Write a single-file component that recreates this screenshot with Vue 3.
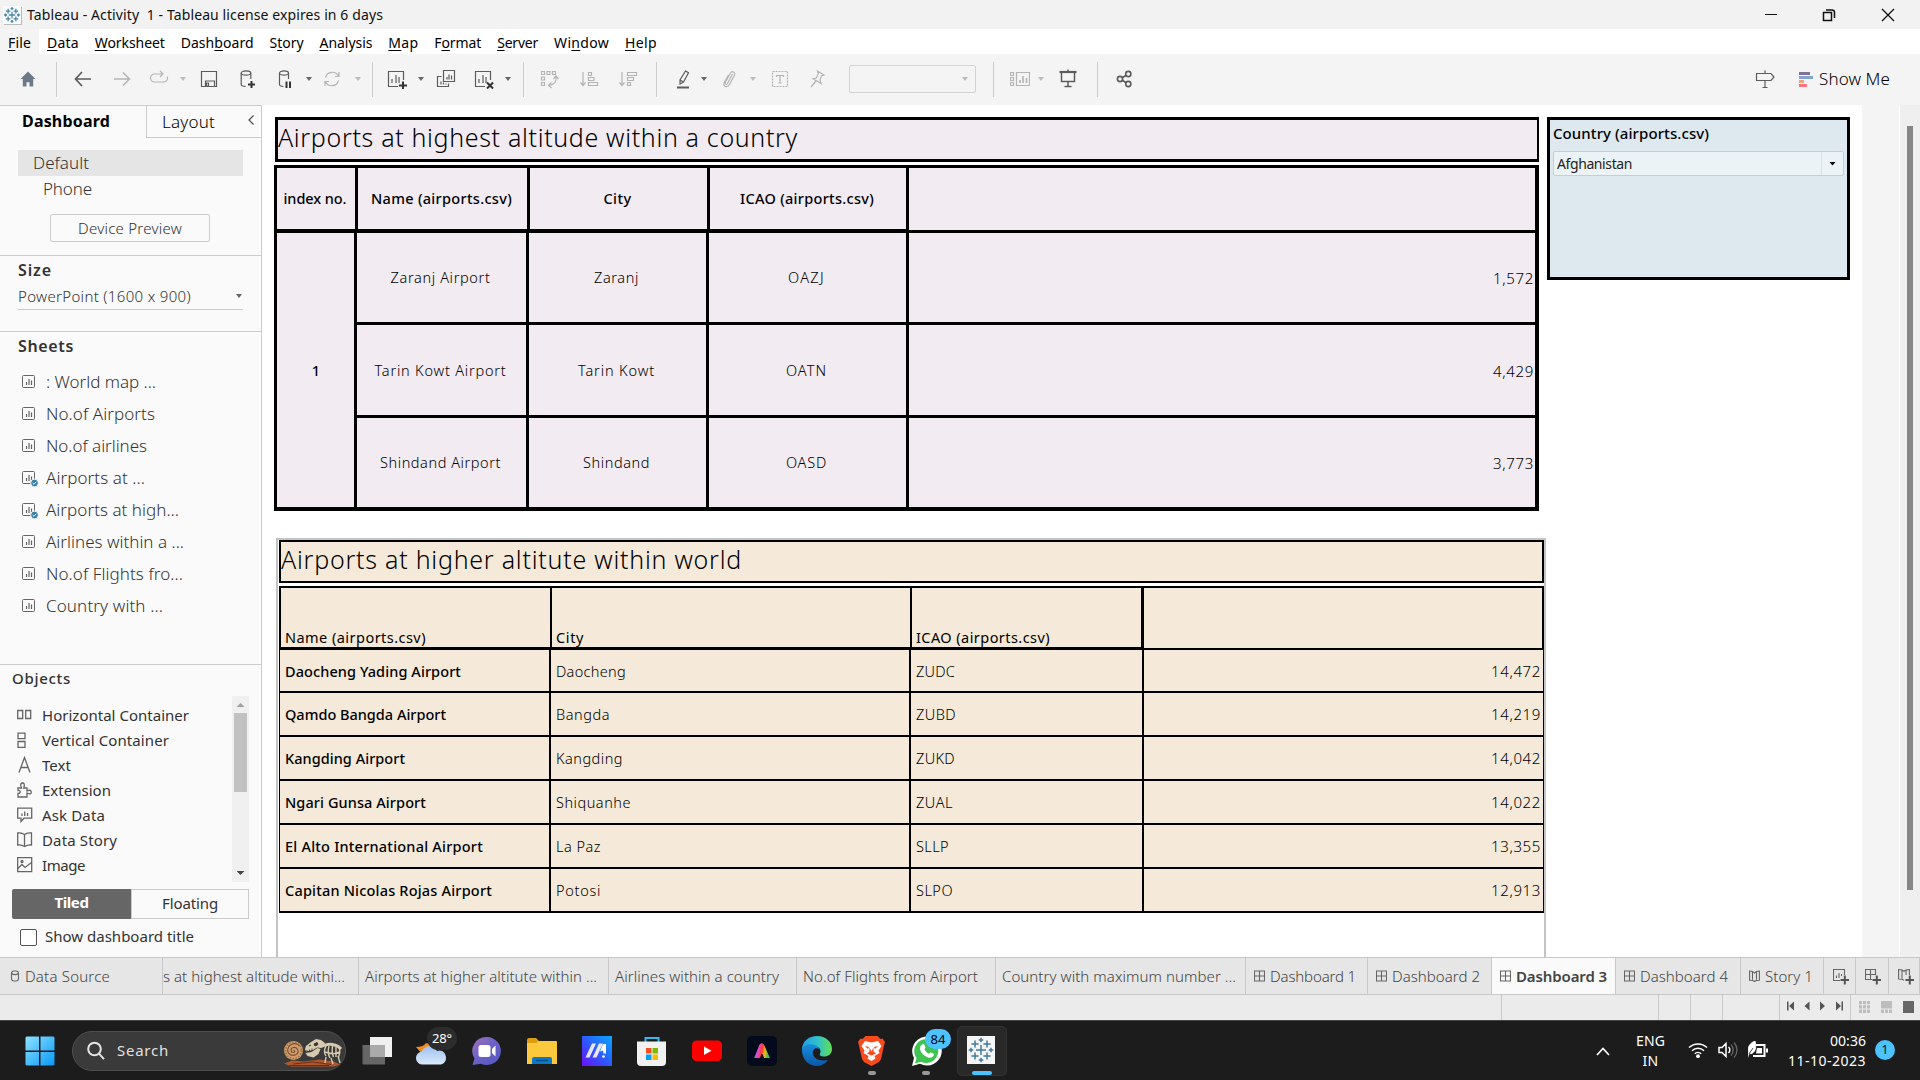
<script setup>
// Spreads letter spacing so that a label occupies a fixed width
const vFit = {
  mounted(el, { value }) {
    if (!value) return
    const r = document.createRange()
    r.selectNodeContents(el)
    const w = r.getBoundingClientRect().width
    const n = el.textContent.trim().length
    if (w && n) el.style.letterSpacing = ((value - w) / n).toFixed(3) + 'px'
  }
}

const menus = [
  ['', 'F', 'ile', 23], ['', 'D', 'ata', 32], ['', 'W', 'orksheet', 70], ['Dash', 'b', 'oard', 73],
  ['S', 't', 'ory', 34], ['', 'A', 'nalysis', 53], ['', 'M', 'ap', 30], ['F', 'o', 'rmat', 47],
  ['', 'S', 'erver', 41], ['Wi', 'n', 'dow', 55], ['', 'H', 'elp', 32]
]

const bars = '<path d="M6 14V10M9 14V6M12 14V8"/>'
const icons = {
  home: '<path d="M10 2.5L2.5 10h2.3v7.5h3.7v-4.3h3v4.3h3.7V10h2.3z" fill="#6c7986" stroke="none"/>',
  back: '<path d="M18 10H2.5M9 3L2.5 10 9 17" stroke-width="1.7"/>',
  fwd: '<path d="M2 10h15.5M11 3.5l6.5 6.5-6.5 6.5" stroke-width="1.5"/>',
  redo: '<path d="M13 5.500H5.500a4 4 0 0 0 0 8h9a4 4 0 0 0 4-4V8M11 2.500l3 3-3 3" transform="translate(0 -.5)"/>',
  save: '<path d="M2.5 2.5h15v15h-15zM6.500 17.500v-5.500h9v5.500"/><path d="M7.500 14h2v3h-2z"/>',
  ds: '<ellipse cx="8" cy="4" rx="4.800" ry="2.200"/><path d="M3.200 4v11.500c0 1 2 1.800 4.500 2M12.800 4v6"/><path class="b" d="M10 15.500h7M13.500 12v7"/>',
  pause: '<ellipse cx="9" cy="4" rx="4.500" ry="2.200"/><path d="M4.500 4v11.500c0 1 2 1.800 4 2M13.500 4v6"/><path class="b" d="M11.500 12.500v6.500M15 12.500v6.500"/>',
  refresh: '<path d="M3.500 8.500a7 7 0 0 1 13.200-1M16.500 11.500a7 7 0 0 1-13.200 1M17 3v4.500h-4M3 17v-4.500h4"/>',
  addws: '<path d="M11 17.500H1.500v-15h15V11"/>' + bars.replace('M6', 'M5') + '<path class="b" d="M12 16.500h8M16 12.500v8"/>',
  dup: '<path d="M7.500 1.500h11v11h-11zM5.500 7.500h-4v10h11v-3"/><path d="M11 10.500V8M13 10.500V5.500M15.500 10.500V6.500M5 15.500v-3M7.500 15.500v-2M10 15.500v-1"/>',
  clear: '<path d="M11 17.500H1.500v-15h15V11"/>' + bars.replace('M6', 'M5') + '<path class="b" d="M13 13.500l6 6M19 13.500l-6 6"/>',
  swap: '<path d="M2.500 2.500h3v3h-3zM8 2.500h3v3H8zM13.500 2.500h3v3h-3zM2.500 8h3v3h-3zM2.500 13.500h3v3h-3zM17 8c1 4-2 8-7 8.500M12.500 13.500l-3 3 3 2.500M14.500 10l2.500-3 2.500 3"/>',
  asc: '<path d="M4 3v13M1.500 13.500L4 16.500l2.500-3M9.500 3.500h3v3h-3zM9.500 8.500h5.500v3H9.500zM9.500 13.500h9v3h-9z"/>',
  desc: '<path d="M4 3v13M1.500 13.500L4 16.500l2.500-3M9.500 3.500h9v3h-9zM9.500 8.500h6v3h-6zM9.500 13.500h3v3h-3z"/>',
  marker: '<path d="M12.500 2l3 1.700-5 9.300-3.500 2V11zM7 11l3.500 2"/><path d="M4 18.500h12" stroke-width="2"/>',
  clip: '<path d="M13 5l-5 9.500c-1 1.500-3 .5-2-1.500l5-9c1.500-2.500 5-1 4 2l-5 9.500c-2.500 4-7 2-5-2.500L9 6" transform="translate(.5 0)"/>',
  textbox: '<path d="M2.500 2.500h15v15h-15z" stroke-dasharray="2 1"/><path d="M6.500 8V6.500h7V8M10 6.500v7.500M8.500 14h3"/>',
  pin: '<path d="M10.500 2l6.500 4-2.500.8-1.500 4.200 1 3.500-8-4.700 3.300-.8 2-4.500zM9 12l-5 6"/>',
  fit: '<path d="M.5 3.500h3v3h-3zM.5 8.500h3v3h-3zM.5 13.500h3v3h-3zM6.500 3.500h13v13h-13z"/><path d="M10 14v-3M13 14V7M16.500 14V9" stroke-width="1.600"/>',
  present: '<path d="M1.500 3h17" stroke-width="2.200"/><path d="M3.500 3.500v9h13v-9M10 13v4.500M6.500 17.500h7M10 0.500V3" stroke-width="1.500"/>',
  share: '<g stroke-width="1.600"><circle cx="6" cy="10" r="2.600"/><circle cx="14.300" cy="5" r="2.600"/><circle cx="14.300" cy="15" r="2.600"/><path d="M8.200 8.700l4-2.400M8.200 11.300l4 2.400"/></g>',
  sign: '<path d="M1.500 4.500H16l3 3.500-3 3.500H1.500zM10 1.500v3M10 11.500V19M7.500 18.500h5"/>'
}
// A trailing dash marks a disabled tool
const tools = [
  'home', '|', 'back', 'fwd-', 'redo-', 'v-', 'save', 'ds', 'pause', 'v', 'refresh-', 'v-', '|',
  'addws', 'v', 'dup', 'clear', 'v', '|', 'swap-', 'asc-', 'desc-', '|', 'marker', 'v', 'clip-', 'v-',
  'textbox-', 'pin-', 'combo', '|', 'fit-', 'v-', 'present', '|', 'share', 'sign'
].map(t => ({ name: t.replace('-', ''), off: t.endsWith('-') }))

const sheets = [
  [': World map ...', 110], ['No.of Airports', 109], ['No.of airlines', 101], ['Airports at ...', 99, true],
  ['Airports at high...', 133, true], ['Airlines within a ...', 138], ['No.of Flights fro...', 137], ['Country with ...', 117]
]

const objects = [
  ['Horizontal Container', 147, '<path d="M.7 4.500h5v8h-5zM8.700 4.500h5v8h-5z"/>'],
  ['Vertical Container', 127, '<path d="M1 2.200h7v5.500H1zM1 10.500h7v6H1z"/>'],
  ['Text', 29, '<path d="M2 16.500L7.500 1.500 13 16.500M4 11.500h7"/>'],
  ['Extension', 69, '<path d="M1 7h3.500C3 3 4 2 5.500 2S8 3 6.800 7H10v3c3-1.500 4.300-.5 4.300 1.200S13 13.500 10 12v4H1v-3.500c3 0 3-3.500 0-3z"/>'],
  ['Ask Data', 63, '<path d="M.7 2.200h14v10H7L4 15.500v-3.300H.7zM5 10V7.500M7.700 10V5.500M10.500 10V7"/>'],
  ['Data Story', 75, '<path d="M7.500 3.500C5 1.500 3 1.500.7 2v12c2.500-.5 4.500 0 6.800 1.500C10 14 12 13.500 14.500 14V2C12 1.500 10 1.500 7.500 3.500zV15"/>'],
  ['Image', 43, '<path d="M.7 1.700h14v14h-14zM1 12.500l4-4 3 3 6.500-5"/><circle cx="5" cy="5.500" r="1"/>']
]

const rows1 = [
  [['Zaranj Airport', 100], ['Zaranj', 45], ['OAZJ', 37], ['1,572', 41]],
  [['Tarin Kowt Airport', 132], ['Tarin Kowt', 77], ['OATN', 41], ['4,429', 41]],
  [['Shindand Airport', 121], ['Shindand', 67], ['OASD', 41], ['3,773', 41]]
]
const rows2 = [
  [['Daocheng Yading Airport', 176], ['Daocheng', 70], ['ZUDC', 39], ['14,472', 50]],
  [['Qamdo Bangda Airport', 161], ['Bangda', 54], ['ZUBD', 40], ['14,219', 50]],
  [['Kangding Airport', 120], ['Kangding', 67], ['ZUKD', 39], ['14,042', 50]],
  [['Ngari Gunsa Airport', 141], ['Shiquanhe', 75], ['ZUAL', 37], ['14,022', 50]],
  [['El Alto International Airport', 198], ['La Paz', 45], ['SLLP', 33], ['13,355', 50]],
  [['Capitan Nicolas Rojas Airport', 207], ['Potosi', 45], ['SLPO', 37], ['12,913', 50]]
]

const tabs = [
  { t: 'Data Source', w: 85, i: 'db' },
  { t: 's at highest altitude withi...', w: 182, cut: true },
  { t: 'Airports at higher altitute within ...', w: 232 },
  { t: 'Airlines within a country', w: 164 },
  { t: 'No.of Flights from Airport', w: 175 },
  { t: 'Country with maximum number ...', w: 234 },
  { t: 'Dashboard 1', w: 86, i: 'dash' },
  { t: 'Dashboard 2', w: 88, i: 'dash' },
  { t: 'Dashboard 3', w: 91, i: 'dash', on: true },
  { t: 'Dashboard 4', w: 88, i: 'dash' },
  { t: 'Story 1', w: 48, i: 'story' }
]
const tabIcons = {
  db: '<rect x="2.500" y="1" width="7" height="10" rx="2.500"/><path d="M2.500 3.500c1.500 1.500 5.500 1.500 7 0"/>',
  dash: '<path d="M.5 1h10v10H.5zM.5 6h10M5.500 1v10"/>',
  story: '<path d="M5.500 3C4.500 1.500 3 1 .6 1v9.300c2.400 0 3.900.2 4.900 1.200 1-1 2.500-1.200 4.900-1.200V1C8 1 6.500 1.500 5.500 3z"/><path d="M3.500 1.500v8.300M7.500 1.500v8.300"/>'
}
const addPlus = '<path class="b" d="M7.500 12h8.500M11.800 7.500v9"/>'
const adders = [
  '<path d="M7 12.500H.5v-11h11V7M3.500 10V7.500M6 10V5M8.500 8V6"/>',
  '<path d="M7 11.500H.5v-10h10V7M.5 6.500h10M5.500 1.500v10"/>',
  '<path d="M6 3.500C5 2 3.500 1.500.6 1.500v9.500c2.900 0 4 .2 5.400 1.200M6 3.500C7 2 8.500 1.500 11.400 1.500V7M4 2v8.500M8 2v5"/>'
]
const crosses = [
  [14, 14, 5], [8, 8, 3.600], [20, 8, 3.600], [8, 20, 3.600], [20, 20, 3.600],
  [14, 4, 2.300], [14, 24, 2.300], [4, 14, 2.300], [24, 14, 2.300]
].map(([x, y, r]) => `M${x - r} ${y}h${2 * r}M${x} ${y - r}v${2 * r}`).join('')
</script>

<template>
  <div class="screen">
    <header class="title">
      <svg class="applogo" viewBox="0 0 28 28"><path :d="crosses" stroke="#4a86ab" stroke-width="2" fill="none" /></svg>
      <span v-fit="356" class="cap">Tableau - Activity&nbsp; 1 - Tableau license expires in 6 days</span>
      <div class="winbtns">
        <svg viewBox="0 0 14 14"><path d="M1 6.500h12" /></svg>
        <svg viewBox="0 0 14 14"><path d="M1.500 4.500h8v8h-8zM4 2h6a2.500 2.500 0 0 1 2.500 2.500v5.500" stroke-width="1.500" /></svg>
        <svg viewBox="0 0 14 14"><path d="M1 1l12 12M13 1L1 13" stroke-width="1.300" /></svg>
      </div>
    </header>

    <nav class="menu">
      <span v-for="m in menus" :key="m[2]" class="mi"><span v-fit="m[3]">{{ m[0] }}<u>{{ m[1] }}</u>{{ m[2] }}</span></span>
    </nav>

    <div class="toolbar">
      <template v-for="(t, i) in tools" :key="i">
        <i v-if="t.name === '|'" class="sep"></i>
        <i v-else-if="t.name === 'v'" class="caret" :class="{ off: t.off }"></i>
        <div v-else-if="t.name === 'combo'" class="combo"><i class="caret off"></i></div>
        <svg v-else class="tool" :class="{ off: t.off }" viewBox="0 0 20 20" v-html="icons[t.name]"></svg>
      </template>
      <div class="showme">
        <svg width="14" height="15" viewBox="0 0 14 15">
          <path d="M0 0h11v3H0z" fill="#85709a" /><path d="M0 4h14v3H0z" fill="#82a6cf" />
          <path d="M0 8h5v3H0z" fill="#f2a477" /><path d="M0 12h8v3H0z" fill="#fb7380" />
        </svg>
        <span v-fit="71">Show Me</span>
      </div>
    </div>

    <main>
      <aside>
        <div class="ptabs">
          <div class="pt on"><b v-fit="88">Dashboard</b></div>
          <div class="pt lay"><span v-fit="53">Layout</span>
            <svg width="8" height="12" viewBox="0 0 8 12"><path d="M6.500 1.500L2 6l4.500 4.500" fill="none" stroke="#555" stroke-width="1.300" /></svg>
          </div>
        </div>
        <div class="devices">
          <div class="dev sel"><span v-fit="56">Default</span></div>
          <div class="dev ph"><span v-fit="49">Phone</span></div>
          <div class="preview"><span v-fit="104">Device Preview</span></div>
        </div>
        <section class="size">
          <h3><span v-fit="34">Size</span></h3>
          <div class="select"><span v-fit="173">PowerPoint (1600 x 900)</span><i class="caret"></i></div>
        </section>
        <section class="sheets">
          <h3><span v-fit="56">Sheets</span></h3>
          <div v-for="s in sheets" :key="s[0]" class="sheet">
            <svg width="18" height="18" viewBox="0 0 18 18">
              <rect x=".5" y="2.500" width="12" height="12" rx="1" fill="none" stroke="#666" />
              <path d="M4.500 12V9M7 12V6M9.500 12V7.500" stroke="#666" stroke-width="1.200" />
              <template v-if="s[2]">
                <circle cx="12.500" cy="14" r="3.900" fill="#3b7fa3" stroke="#fafafa" />
                <path d="M10.700 14l1.300 1.300 2.300-2.600" fill="none" stroke="#fff" />
              </template>
            </svg>
            <span v-fit="s[1]">{{ s[0] }}</span>
          </div>
        </section>
        <section class="objects">
          <h3><span v-fit="59">Objects</span></h3>
          <div class="olist">
            <div class="oitems">
              <div v-for="o in objects" :key="o[0]" class="obj">
                <svg width="16" height="17" viewBox="0 0 16 17" v-html="o[2]"></svg><span v-fit="o[1]">{{ o[0] }}</span>
              </div>
            </div>
            <div class="oscroll"><i class="up"></i><i class="thumb"></i><i class="down"></i></div>
          </div>
          <div class="mode"><b><span v-fit="34">Tiled</span></b><div><span v-fit="56">Floating</span></div></div>
          <div class="check"><i></i><span v-fit="149">Show dashboard title</span></div>
        </section>
      </aside>

      <div class="canvas">
        <div class="maincol">
          <h1 class="t1"><span v-fit="520">Airports at highest altitude within a country</span></h1>
          <div class="table one">
            <div class="hrow">
              <div><span v-fit="63">index no.</span></div><div><span v-fit="141">Name (airports.csv)</span></div>
              <div><span v-fit="28">City</span></div><div><span v-fit="134">ICAO (airports.csv)</span></div><div></div>
            </div>
            <div class="body">
              <div class="idx">1</div>
              <template v-for="r in rows1" :key="r[0][0]">
                <div v-for="(c, j) in r" :key="j" :class="{ num: j === 3 }"><span v-fit="c[1]">{{ c[0] }}</span></div>
              </template>
            </div>
          </div>
          <div class="frame">
            <h1 class="t2"><span v-fit="461">Airports at higher altitute within world</span></h1>
            <div class="table two">
              <div class="hrow">
                <div><span v-fit="141">Name (airports.csv)</span></div><div><span v-fit="28">City</span></div>
                <div><span v-fit="134">ICAO (airports.csv)</span></div><div></div>
              </div>
              <div class="body">
                <template v-for="r in rows2" :key="r[0][0]">
                  <div v-for="(c, j) in r" :key="j" :class="{ num: j === 3, name: j === 0 }"><span v-fit="c[1]">{{ c[0] }}</span></div>
                </template>
              </div>
            </div>
          </div>
        </div>
        <div class="filter">
          <b><span v-fit="156">Country (airports.csv)</span></b>
          <div class="dd"><span v-fit="75">Afghanistan</span><div class="ddb"><i></i></div></div>
        </div>
      </div>
      <div class="gutter"></div>
      <div class="vscroll"><i></i></div>
    </main>

    <div class="tabs">
      <div v-for="t in tabs" :key="t.t" class="tab" :class="{ on: t.on, cut: t.cut, ico: t.i, src: t.i === 'db' }">
        <svg v-if="t.i" width="11" height="12" viewBox="0 0 11 12" v-html="tabIcons[t.i]"></svg>
        <span v-fit="t.w">{{ t.t }}</span>
      </div>
      <div v-for="(a, i) in adders" :key="i" class="tab add">
        <svg width="17" height="17" viewBox="0 0 17 17" v-html="a + addPlus"></svg>
      </div>
    </div>

    <div class="status">
      <i></i><i></i><i></i><i></i><i></i>
      <div class="nav">
        <svg width="57" height="12" viewBox="0 0 57 12"><path fill="#555" d="M0 1.500h1.500v9H0zM7 1.500v9L2 6zM22.500 1.500v9L17.500 6zM33 1.500v9l5-4.500zM49 1.500v9l5-4.500zM54.500 1.500H56v9h-1.500z" /></svg>
      </div>
      <div class="views">
        <svg width="55" height="12" viewBox="0 0 55 12">
          <path fill="#bdbdbd" d="M0 0h3v3.300H0zM4 0h3v3.300H4zM8 0h3v3.300H8zM0 4.300h3v3.300H0zM4 4.300h3v3.300H4zM8 4.300h3v3.300H8zM0 8.600h3v3.300H0zM4 8.600h3v3.300H4zM8 8.600h3v3.300H8zM22 0h11v7.600H22zM22 8.600h3v3.300h-3zM26 8.600h3v3.300h-3zM30 8.600h3v3.300h-3z" />
          <path fill="#666" d="M44 0h11v12H44z" />
        </svg>
      </div>
    </div>

    <footer class="task">
      <svg width="30" height="30" viewBox="0 0 30 30">
        <defs><linearGradient id="win" x1="0" y1="0" x2="1" y2="1"><stop offset="0" stop-color="#8be3ff" /><stop offset="1" stop-color="#0c97f7" /></linearGradient></defs>
        <path fill="url(#win)" d="M1.500.5H14v14H.500v-13zM15.500.5h13l1 1v13h-14zM.5 16H14v13.500H1.500l-1-1zM15.500 16h14v12.500l-1 1h-13z" />
      </svg>
      <div class="search">
        <svg width="20" height="20" viewBox="0 0 20 20"><circle cx="8.500" cy="8" r="6.300" /><path d="M13 12.700l5 5.500" /></svg>
        <span v-fit="52">Search</span>
        <svg class="fossil" width="60" height="32" viewBox="0 0 60 32">
          <path d="M1 28.500l8-3 12 1 16-2 14 2 6 3-6 2H8z" fill="#b0562c" /><path d="M10 29l20-2 18 2.500M6 30.500h40" stroke="#6f3016" fill="none" />
          <circle cx="10.500" cy="15.500" r="9.500" fill="#cf9f70" />
          <circle cx="10.500" cy="15.500" r="8" stroke="#a97548" stroke-width="2" stroke-dasharray="1.500 1.500" />
          <path d="M10.500 15.500c1.500-1 1.500 2-.5 2s-3.500-4 .5-5 6.500 4.500 2.500 7-9.500-1-8-6 8-6.500 11.500-2.500" stroke="#7d5030" fill="none" stroke-width="1.200" />
          <path d="M22 14l1-3 5-4 5-3 5 1 4 3-1 4-3 1-4-.5-4 2.500-7 1.500zM22.500 18l6-1 6-4 3 1-2 5-5 3.500-6-1.500z" fill="#d6cab0" />
          <path d="M31 9l3-1.500 1 2-3 1.500zM26 11l2-1" fill="#3a342c" stroke="#3a342c" />
          <path d="M24 17v-2M26.500 16.500v-2M29 15.500v-2" stroke="#3a342c" stroke-width=".8" />
          <path d="M41 11c4-3 13-2 17 3" stroke="#d6cab0" stroke-width="3" fill="none" />
          <path d="M43 11q-3 6 0 10M46 11q-2 7 1 12M49.500 11q-1 7 1 11M53 12q0 6 0 10M56.500 13q1 5-1 9M43 22l-1 6M48 23l2 6M55 21l2 7M42 17q8 3 15 0" stroke="#d6cab0" stroke-width="1.400" fill="none" />
        </svg>
      </div>
      <svg width="30" height="30" viewBox="0 0 30 30"><path d="M8 1h22v20H8z" fill="#f0f0f0" /><path d="M1.500 9H23v19.500H1.500a1 1 0 0 1-1-1V9z" fill="#666" /><path d="M8 9h15v12H8z" fill="#aaa" /></svg>
      <div class="badged">
        <svg width="31" height="30" viewBox="0 0 31 30">
          <defs><linearGradient id="cl" x1="0" y1="0" x2="0" y2="1"><stop offset="0" stop-color="#9fc0f3" /><stop offset="1" stop-color="#dbe9fb" /></linearGradient></defs>
          <path d="M0 11c4 0 8-1 10-4l7 2-2 8-9 1z" fill="#f28a1e" />
          <path d="M7 28.500a6.500 6.500 0 0 1-1-13C8 9 18 8 21 15c5-2 9 2 9 7 0 4-3 6.500-6 6.500z" fill="url(#cl)" />
        </svg>
        <span class="deg"><span v-fit="20">28°</span></span>
      </div>
      <svg width="30" height="30" viewBox="0 0 30 30">
        <defs><linearGradient id="tm" x1="0" y1="0" x2="1" y2="1"><stop offset="0" stop-color="#a070b8" /><stop offset="0.500" stop-color="#6a60c8" /><stop offset="1" stop-color="#5058c0" /></linearGradient></defs>
        <path d="M15 1a14 14 0 1 1-6 26.700L.5 29l2-6.500A14 14 0 0 1 15 1z" fill="url(#tm)" />
        <rect x="6.500" y="9" width="12" height="12" rx="2.500" fill="#fff" /><path d="M20 13l3.500-3.500V20.500L20 17z" fill="#fff" />
      </svg>
      <svg width="30" height="30" viewBox="0 0 30 30">
        <path d="M0 4a2 2 0 0 1 2-2h7l3 3v6H0z" fill="#e09c10" /><path d="M0 7h9l3-2h17a1 1 0 0 1 1 1v22H0z" fill="#fdc93c" />
        <path d="M5 28v-5a2 2 0 0 1 2-2h16a2 2 0 0 1 2 2v5z" fill="#0f78c6" /><path d="M9 24.500h12" stroke="#07518d" stroke-width="1.500" />
      </svg>
      <svg width="30" height="30" viewBox="0 0 30 30">
        <defs><linearGradient id="ma" x1="0" y1="1" x2="1" y2="0"><stop offset="0" stop-color="#6a10ff" /><stop offset="0.500" stop-color="#2c5cff" /><stop offset="1" stop-color="#08a8ff" /></linearGradient></defs>
        <path d="M0 0h30v30H0z" fill="url(#ma)" />
        <path d="M3.500 21.500L10 7.500h4l-6.500 14zM10.500 21.500L17 7.500h4l-6.500 14z" fill="#e6e6ff" /><path d="M18 15.500L21 8h3v9.500h-2.500l-.5-3z" fill="#fff" /><circle cx="21.500" cy="20.500" r="1.300" fill="#fff" />
      </svg>
      <svg width="30" height="30" viewBox="0 0 30 30">
        <path d="M8.500 6V2h13v4" fill="none" stroke="#38b8f0" stroke-width="2" /><path d="M0 5.500h29V26a4 4 0 0 1-4 4H4a4 4 0 0 1-4-4z" fill="#f1f1f1" />
        <path d="M9 12h5.500v5.500H9z" fill="#f25022" /><path d="M15.500 12H21v5.500h-5.500z" fill="#7fba00" /><path d="M9 18.500h5.500V24H9z" fill="#00a4ef" /><path d="M15.500 18.500H21V24h-5.500z" fill="#ffb900" />
      </svg>
      <svg width="30" height="30" viewBox="0 0 30 30"><rect y="4.500" width="30" height="20.500" rx="4.500" fill="#f00" /><path d="M12 10.500v8.500l7.500-4.200z" fill="#fff" /></svg>
      <svg width="30" height="30" viewBox="0 0 30 30">
        <defs><linearGradient id="ad" x1="0" y1="0.300" x2="1" y2="0.500"><stop offset="0" stop-color="#6b6bff" /><stop offset="0.250" stop-color="#e04bd8" /><stop offset="0.500" stop-color="#ff3a2a" /><stop offset="0.720" stop-color="#ffb020" /><stop offset="1" stop-color="#30c860" /></linearGradient></defs>
        <rect width="30" height="30" rx="5" fill="#020a1c" />
        <path d="M8 21.500L13 9q1.500-2.500 3.500 0l5.500 12.500h-4.500L15 15.500 12.500 21.500z" fill="url(#ad)" stroke="url(#ad)" stroke-width="1.200" />
      </svg>
      <svg width="30" height="30" viewBox="0 0 30 30">
        <defs>
          <linearGradient id="e1" x1="0" y1="0" x2="1" y2="0"><stop offset="0" stop-color="#1f9fe0" /><stop offset="0.500" stop-color="#30bfd0" /><stop offset="1" stop-color="#62df50" /></linearGradient>
          <linearGradient id="e2" x1="0" y1="0" x2="0" y2="1"><stop offset="0" stop-color="#1a8fdc" /><stop offset="1" stop-color="#0b56a8" /></linearGradient>
        </defs>
        <path d="M0 14C0 5 7 0 15 0c9 0 15 6 15 13 0 5-4 7.500-8 7.500-3 0-5-1-4-3 1.500-3 0-7-5-7C6 9.500 2 11 0 14z" fill="url(#e1)" />
        <path d="M0 14c1.500-5 6-6.500 11-5.500 4 .8 6 3 6 5-3-3-7 0-6 4.500 1 5 7 7.500 15 6C23 28 19 30 15 30 6 30 0 23 0 14z" fill="url(#e2)" />
      </svg>
      <div class="badged">
        <svg width="30" height="30" viewBox="0 0 30 30">
          <path d="M8.500 0h12l3 3 2-.5L28 6l-1 3.500-3 13.500-2 3-7.500 4L7 26l-2-3L2 9.500 1 6l2.500-3.500L5.500 3z" fill="#fa4a1c" />
          <path d="M8 5l6.500 1.500L21 5l3.500 5-3 4.500 1 2.500-5 3 1 2.500-4 2.500-4-2.500 1-2.500-5-3 1-2.500-3-4.500z" fill="#fff" />
          <path d="M8 10l4 1-1 2zM21 10l-4 1 1 2zM12.500 11.500v4l-2.500 2 4.500 2 4.500-2-2.500-2v-4l-2 4z" fill="#fa4a1c" />
        </svg><i class="dot"></i>
      </div>
      <div class="badged">
        <svg width="32" height="30" viewBox="0 0 32 30">
          <path d="M1 30l2-8A14.800 14.500 0 1 1 9 27.800z" fill="#fff" /><path d="M4 27.500l1.500-5.500A12 12 0 1 1 10 25.800z" fill="#3fc351" />
          <path d="M11 8.500l2-.5 1.500 3.500-1 2c1 2 2.500 3.300 4.500 4.200l1.500-1.500 3.500 1.700c0 3-3.500 4.500-6 3.500-4-1.500-7-4.500-8-8-.5-2 .8-4 2-4.900z" fill="#fff" />
        </svg>
        <span class="cnt"><span v-fit="15">84</span></span><i class="dot"></i>
      </div>
      <div class="active">
        <svg width="28" height="28" viewBox="0 0 28 28"><path d="M0 0h28v28H0z" fill="#f5f5f5" /><path :d="crosses" stroke="#41799f" stroke-width="1.500" /></svg><i></i>
      </div>
      <svg width="16" height="12" viewBox="0 0 16 12"><path d="M2 10l6-6.500 6 6.500" fill="none" stroke="#fff" stroke-width="1.700" /></svg>
      <div class="lang"><span v-fit="29">ENG</span><span v-fit="16">IN</span></div>
      <svg class="tray" width="20" height="18" viewBox="0 0 20 18"><path d="M1 6.500a13 13 0 0 1 18 0M4 9.800a8.600 8.600 0 0 1 12 0M6.800 12.700a4.600 4.600 0 0 1 6.400 0" fill="none" stroke="#fff" stroke-width="1.500" /><circle cx="10" cy="15.200" r="1.900" fill="#fff" /></svg>
      <svg class="tray" width="20" height="18" viewBox="0 0 20 18"><path d="M1 6.500h3l4-4v13l-4-4H1zM10.500 6a4 4 0 0 1 0 6" fill="none" stroke="#fff" stroke-width="1.500" /><path d="M13 3.500a8 8 0 0 1 0 11M16 1.500a11 11 0 0 1 0 15" fill="none" stroke="#666" stroke-width="1.300" /></svg>
      <svg class="tray" width="21" height="18" viewBox="0 0 21 18"><path d="M8 4h8.500v11H5M19 7.500v4" fill="none" stroke="#fff" stroke-width="2" /><path d="M9 7h5v5.500H8z" fill="#fff" /><path d="M7 0C2 2-1 6 .5 12q.5 2-1 5M.5 12.500c5 1.500 9-4 6.500-12.500z" fill="#fff" stroke="#fff" stroke-width=".8" /><path d="M1 13l4-6" stroke="#1c1c1c" stroke-width=".8" /></svg>
      <div class="clock"><span v-fit="36">00:36</span><span v-fit="78">11-10-2023</span></div>
      <div class="notif">1</div>
    </footer>
  </div>
</template>

<style>
body { margin: 0; overflow: hidden; }
</style>
<style scoped>
.screen { width: 1920px; height: 1080px; display: flex; flex-direction: column; font-family: "Noto Sans", "Open Sans", sans-serif; font-size: 15px; color: #333; overflow: hidden; line-height: 20px; }
.screen * { box-sizing: border-box; white-space: nowrap; }
svg { display: block; fill: none; }
h1, h3 { margin: 0; font-weight: 400; }
.title { height: 29px; flex: none; background: #f2f2f2; display: flex; align-items: center; padding-left: 3px; color: #111; font-size: 14px; }
.applogo { width: 18px; height: 18px; background: #f8fafb; box-shadow: 1px 1px 0 #bbb; margin-right: 6px; }
.winbtns { margin-left: auto; display: flex; gap: 45px; padding-right: 25px; }
.winbtns svg { width: 14px; height: 14px; stroke: #111; }
.winbtns svg:first-child { margin-right: -1px; }
.menu { height: 25px; flex: none; background: #fff; display: flex; align-items: center; color: #000; font-size: 14px; }
.mi { padding: 0 7.900px 0 8px; height: 25px; line-height: 27px; }
.mi:first-child { background: #f4f4f4; }
.mi u { text-underline-offset: 2px; }
.toolbar { height: 51px; flex: none; background: #f4f4f4; padding: 0 0 1px 18px; display: grid; align-items: center; grid-template-columns: 38px 17px 39px 37px 31px 19px 39px 37px 31px 16px 33px 17px 15px 31px 18px 38px 31px 18px 16px 40px 39px 38px 17px 28px 18px 31px 20px 37px 42px 144px 17px 28px 20px 39px 17px 641px 44px auto; }
.tool { width: 20px; height: 20px; stroke: #5c5c5c; stroke-width: 1.2; }
.tool.off { stroke: #b4b4b4; }
.tool :deep(.b), .add :deep(.b) { stroke: #333; stroke-width: 2; }
.sep { width: 1px; height: 35px; background: #ccc; }
.caret { width: 6px; height: 4px; background: #666; clip-path: polygon(0 0, 100% 0, 50% 100%); flex: none; }
.caret.off { background: #bbb; }
.combo { width: 127px; height: 28px; border: 1px solid #d2d2d2; border-radius: 2px; display: flex; align-items: center; justify-content: flex-end; padding-right: 7px; }
.showme { display: flex; gap: 6px; align-items: center; font-size: 17px; font-weight: 300; color: #000; }
main { height: 852px; flex: none; display: flex; background: #fff; }
aside { width: 262px; flex: none; background: #fafafa; border-right: 1px solid #ccc; border-top: 1px solid #ccc; }
.ptabs { display: flex; height: 32px; }
.pt { font-size: 16px; color: #000; }
.pt.on { width: 146px; padding: 5px 0 0 22px; }
.pt.lay { flex: 1; border: solid #ccc; border-width: 0 0 1px 1px; display: flex; padding: 6px 7px 0 15px; justify-content: space-between; font-weight: 300; font-size: 17px; }
.pt.lay svg { margin: 2px -1px 0 0; }
.devices { height: 118px; border-bottom: 1px solid #ccc; padding: 12px 18px 0; font-size: 17px; font-weight: 300; }
.dev { height: 26px; line-height: 26px; padding-left: 15px; }
.dev.sel { background: #e5e5e5; }
.dev.ph { padding-left: 25px; }
.preview { width: 160px; height: 28px; margin: 12px 0 0 32px; border: 1px solid #ccc; border-radius: 2px; text-align: center; font-size: 15px; line-height: 27px; }
.size { height: 76px; border-bottom: 1px solid #ccc; padding: 4px 18px 0; }
h3 { font-size: 16px; font-weight: 600; line-height: 20px; color: #333; }
.select { display: flex; justify-content: space-between; align-items: center; border-bottom: 1px solid #ccc; height: 27px; margin-top: 3px; font-weight: 300; padding-right: 1px; }
.sheets { height: 333px; border-bottom: 1px solid #ccc; padding: 4px 0 0 18px; }
.sheets h3 { margin-bottom: 10px; }
.sheet { height: 32px; display: flex; align-items: center; gap: 6px; padding-left: 4px; font-size: 17px; font-weight: 300; }
.objects { padding: 3px 0 0 12px; }
.objects h3 { font-size: 15px; font-weight: 500; }
.olist { display: flex; height: 186px; margin-top: 8px; width: 237px; justify-content: space-between; }
.oitems { padding-top: 6px; }
.obj { height: 25px; display: flex; align-items: center; gap: 9px; padding-left: 5px; font-size: 15px; }
.obj svg { stroke: #666; stroke-width: 1.3; margin: 0; }
.oscroll { width: 17px; background: #f0f0f0; display: flex; flex-direction: column; align-items: center; padding: 7px 0; }
.up { width: 8px; height: 4px; background: #a0a0a0; clip-path: polygon(50% 0, 100% 100%, 0 100%); }
.thumb { width: 13px; height: 79px; background: #c1c1c1; margin: 6px 0 auto; }
.down { width: 8px; height: 4px; background: #444; clip-path: polygon(0 0, 100% 0, 50% 100%); }
.mode { display: flex; width: 237px; height: 30px; margin-top: 7px; text-align: center; line-height: 26px; }
.mode b { width: 119px; background: #666; color: #fff; border-radius: 2px 0 0 2px; line-height: 27px; }
.mode div { flex: 1; border: 1px solid #ccc; }
.check { display: flex; align-items: center; gap: 8px; padding-left: 8px; margin-top: 9px; }
.check i { width: 17px; height: 17px; border: 1px solid #555; border-radius: 2px; background: #fff; }
.check span { margin-top: -2px; }
.canvas { width: 1600px; flex: none; display: flex; overflow: hidden; color: #111; font-size: 14px; }
.maincol { width: 1285px; flex: none; }
h1 { font-size: 25px; font-weight: 300; color: #000; }
.t1 { margin: 12px 0 0 13px; width: 1264px; height: 45px; border: 3px solid #000; border-right-width: 2px; background: #f2ebf2; line-height: 35px; padding-left: 0; }
.table { background: #000; font-size: 14.500px; color: #000; }
.one { margin: 3px 0 0 12px; width: 1265px; height: 346px; padding: 3px 4px 4px 3px; }
.one .hrow { display: grid; grid-template-columns: 78px 169px 177px 196px 626px; gap: 3px; height: 61px; font-weight: 500; }
.one .hrow > div:last-child { margin-bottom: -1px; }
.one .body { margin-top: 4px; display: grid; grid-template-columns: 77px 169px 177px 197px 626px; grid-template-rows: 89px 90px 89px; gap: 3px; }
.one .hrow > div, .one .body > div { background: #f2ebf2; display: flex; align-items: center; justify-content: center; padding: 0 2px 1px 0; }
.one .body > .idx { grid-row: 1 / 4; font-weight: 500; padding: 0 0 1px 1px; }
.one .body > .num { justify-content: flex-end; padding: 1px 1px 0 0; font-size: 15px; }
.one .body { font-weight: 300; }
.frame { margin: 27px 0 0 14px; width: 1270px; height: 430px; border: 2px solid #c4c4c4; padding-left: 1px; }
.t2 { width: 1265px; height: 43px; border: 2px solid #000; background: #f5ead9; line-height: 35px; padding-left: 0; }
.two { margin-top: 3px; width: 1265px; height: 327px; padding: 2px; }
.two .hrow { display: grid; grid-template-columns: 269px 358px 229px 399px; column-gap: 2px; height: 59px; }
.two .hrow > div:nth-child(4) { margin: 0 0 -1px 1px; }
.two .hrow > div, .two .body > div { background: #f5ead9; padding-left: 4px; display: flex; align-items: center; }
.two .hrow > div { align-items: flex-end; font-weight: 400; }
.two .body { margin: 3px 0 0 -1px; display: grid; grid-template-columns: 269px 358px 231px 399px; grid-template-rows: 41px repeat(5, 42px); gap: 2px; font-weight: 300; }
.two .body > div:nth-child(4n + 2), .two .body > div:nth-child(4n + 3) { padding-left: 5px; }
.two .body > .name { font-weight: 500; padding-left: 5px; }
.two .body > .num { justify-content: flex-end; padding-right: 2px; font-size: 15px; }
.filter { margin-top: 12px; width: 303px; height: 163px; border: 3px solid #000; background: #dde9ef; padding: 3px 3px; color: #000; }
.filter b { font-weight: 500; font-size: 15px; display: block; height: 28px; line-height: 21px; }
.dd { height: 25px; border: 1px solid #c8cdd0; border-radius: 2px; background: #ecf3f6; display: flex; justify-content: space-between; padding-left: 3px; line-height: 24px; color: #222; }
.ddb { width: 22px; border-left: 1px solid #dbe2e5; display: flex; align-items: center; justify-content: center; }
.ddb i { width: 7px; height: 4px; background: #000; clip-path: polygon(0 0, 100% 0, 50% 100%); }
.gutter { width: 37px; background: #f4f4f4; }
.vscroll { width: 21px; background: #efefef; border-left: 1px solid #fff; padding: 21px 0 0 7px; }
.vscroll i { display: block; width: 6px; height: 764px; background: #868686; }
.tabs { height: 38px; flex: none; border: solid #c8c8c8; border-width: 1px 0; background: #e6e6e6; display: grid; grid-template-columns: 163px 196px 250px 188px 199px 250px 122px 124px 124px 125px 83px 32px 33px 31px; position: relative; z-index: 1; }
.tab { border-right: 1px solid #c8c8c8; padding-left: 6px; display: flex; align-items: center; color: #444; font-weight: 300; overflow: hidden; font-size: 15px; }
.tab.cut { padding-left: 0; }
.tab.ico { padding-left: 8px; gap: 5px; }
.tab.src { padding-left: 9px; }
.tab svg { stroke: #666; stroke-width: 1.1; flex: none; }
.tab.on { background: #fafafa; font-weight: 600; color: #444; }
.tab.add { padding-left: 9px; }
.add :deep(.b) { stroke: #555; }
.status { height: 25px; flex: none; background: #ebebeb; display: grid; grid-template-columns: 1502px 157px 32px 32px 57px 71px auto; }
.status i { border-right: 1px solid #c8c8c8; }
.nav { border-right: 1px solid #c8c8c8; padding: 5px 0 0 7px; }
.views { padding: 6px 0 0 8px; }
.task { height: 60px; flex: none; background: #1c1c1c; border-top: 1px solid #444; padding-left: 25px; display: grid; align-items: center; grid-template-columns: 47px 290px 54px 56px 55px 55px 55px 55px 55px 55px 55px 54px 46px 638px 36px 57px 30px 30px 23px 104px auto; color: #fff; font-size: 14px; }
.search { width: 274px; height: 40px; border-radius: 20px; background: #3a3a3a; border: 1px solid #4e4e4e; display: flex; align-items: center; padding-left: 13px; color: #e0e0e0; font-size: 15px; }
.search svg:first-child { stroke: #e4e4e4; stroke-width: 2; margin-right: 11px; }
.search > span { margin-top: -1px; }
.fossil { margin-left: auto; margin-right: 2px; }
.badged { position: relative; width: 30px; height: 30px; }
.deg { position: absolute; left: 11px; top: -9px; width: 30px; height: 23px; border-radius: 12px; background: #2c2c2c; text-align: center; line-height: 22px; font-size: 13px; }
.cnt { position: absolute; left: 14px; top: -7px; width: 26px; height: 20px; border-radius: 10px; background: #4cc2ff; color: #000; text-align: center; font-size: 13px; }
.dot { position: absolute; left: 11px; bottom: -9px; width: 8px; height: 4px; border-radius: 2px; background: #999; }
.active { width: 50px; height: 50px; background: #292929; border: 1px solid #333; border-radius: 5px; position: relative; padding: 9px 0 0 9px; }
.active i { position: absolute; left: 14px; bottom: 0; width: 20px; height: 4px; border-radius: 2px; background: #4cc2ff; }
.lang { width: 39px; text-align: center; display: flex; flex-direction: column; align-items: center; }
.tray { margin-top: -2px; }
.clock { width: 95px; display: flex; flex-direction: column; align-items: flex-end; }
.notif { width: 20px; height: 20px; border-radius: 50%; background: #4cc2ff; color: #111; text-align: center; font-size: 12px; line-height: 20px; margin-top: -1px; }
</style>
